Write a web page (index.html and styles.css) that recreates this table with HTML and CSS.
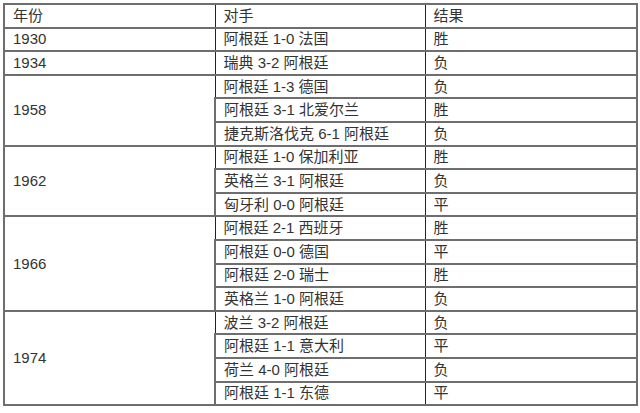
FILE: index.html
```html
<!DOCTYPE html>
<html lang="zh">
<head>
<meta charset="utf-8">
<link rel="stylesheet" href="styles.css">
</head>
<body>
<div class="wrap">
<table class="results">
  <colgroup><col class="c1"><col class="c2"><col class="c3"></colgroup>
  <tr><td>年份</td><td>对手</td><td>结果</td></tr>
  <tr><td>1930</td><td>阿根廷 1-0 法国</td><td>胜</td></tr>
  <tr><td>1934</td><td>瑞典 3-2 阿根廷</td><td>负</td></tr>
  <tr><td rowspan="3">1958</td><td>阿根廷 1-3 德国</td><td>负</td></tr>
  <tr><td>阿根廷 3-1 北爱尔兰</td><td>胜</td></tr>
  <tr><td>捷克斯洛伐克 6-1 阿根廷</td><td>负</td></tr>
  <tr><td rowspan="3">1962</td><td>阿根廷 1-0 保加利亚</td><td>胜</td></tr>
  <tr><td>英格兰 3-1 阿根廷</td><td>负</td></tr>
  <tr><td>匈牙利 0-0 阿根廷</td><td>平</td></tr>
  <tr><td rowspan="4">1966</td><td>阿根廷 2-1 西班牙</td><td>胜</td></tr>
  <tr><td>阿根廷 0-0 德国</td><td>平</td></tr>
  <tr><td>阿根廷 2-0 瑞士</td><td>胜</td></tr>
  <tr><td>英格兰 1-0 阿根廷</td><td>负</td></tr>
  <tr><td rowspan="4">1974</td><td>波兰 3-2 阿根廷</td><td>负</td></tr>
  <tr><td>阿根廷 1-1 意大利</td><td>平</td></tr>
  <tr><td>荷兰 4-0 阿根廷</td><td>负</td></tr>
  <tr><td>阿根廷 1-1 东德</td><td>平</td></tr>
</table>
</div>
</body>
</html>
```

FILE: styles.css
```css
html, body {
  margin: 0;
  padding: 0;
  background: #ffffff;
}
.wrap {
  padding: 3px 0 0 3px;
}
.results {
  border-collapse: collapse;
  width: 633px;
  table-layout: fixed;
  font-family: "Liberation Sans", "Noto Sans CJK SC", sans-serif;
  font-size: 15px;
  color: #333333;
  border: 2px solid #6e6e6e;
}
.c1 { width: 211px; }
.c2 { width: 210px; }
.c3 { width: 212px; }
.results td {
  height: 23.6px;
  padding: 0 0 0 8px;
  box-sizing: border-box;
  border-top: 2px solid #6e6e6e;
  border-bottom: 2px solid #6e6e6e;
  border-left: 1px solid #222222;
  border-right: 1px solid #222222;
  vertical-align: middle;
  line-height: 18px;
  white-space: nowrap;
}
.results td:first-child {
  border-left: 2px solid #6e6e6e;
}
```
